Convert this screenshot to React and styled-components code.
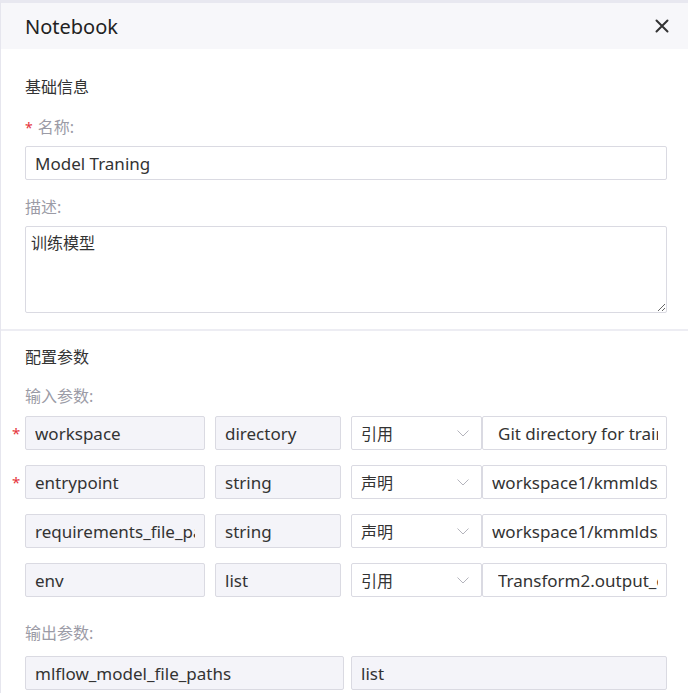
import React from 'react';
import styled, { createGlobalStyle } from 'styled-components';

const GlobalStyle = createGlobalStyle`
  html, body {
    margin: 0;
    padding: 0;
    background: #fff;
    overflow: hidden;
  }
  body {
    font-family: 'Noto Sans', 'Noto Sans CJK SC', sans-serif;
    color: #333;
  }
`;

const inputParams = [
  { name: 'workspace', type: 'directory', mode: '引用', value: 'Git directory for training', required: true, indent: 6 },
  { name: 'entrypoint', type: 'string', mode: '声明', value: 'workspace1/kmmlds/train.py', required: true, indent: 0 },
  { name: 'requirements_file_path', type: 'string', mode: '声明', value: 'workspace1/kmmlds/requirements.txt', required: false, indent: 0 },
  { name: 'env', type: 'list', mode: '引用', value: 'Transform2.output_env', required: false, indent: 6 },
];

export default function App() {
  return (
    <>
      <GlobalStyle />
      <Panel>
        <Header>
          <Title>Notebook</Title>
          <CloseButton aria-label='close'>
            <svg width='14' height='14' viewBox='0 0 14 14'>
              <path d='M1.5 1.5 L12.5 12.5 M12.5 1.5 L1.5 12.5' stroke='#333' strokeWidth='2' strokeLinecap='round' />
            </svg>
          </CloseButton>
        </Header>

        <Section>
          <SectionTitle>基础信息</SectionTitle>
          <Label $gap={7}>
            <Star>*</Star>名称:
          </Label>
          <TextInput readOnly value='Model Traning' />
          <Label $top={16} $gap={8}>描述:</Label>
          <TextArea readOnly defaultValue='训练模型' />
        </Section>

        <Divider />

        <Section $top={15}>
          <SectionTitle>配置参数</SectionTitle>
          <Label $top={17} $gap={9}>输入参数:</Label>
          <ParamList>
            {inputParams.map((p) => (
              <ParamRow key={p.name}>
                <StarCell>{p.required ? '*' : ''}</StarCell>
                <GreyInput readOnly value={p.name} $width={180} />
                <GreyInput readOnly value={p.type} $width={126} />
                <SelectBox>
                  <span>{p.mode}</span>
                  <svg width='12' height='7' viewBox='0 0 12 7'>
                    <path d='M0.5 0.5 L6 6 L11.5 0.5' fill='none' stroke='#b4b4bc' strokeWidth='1' />
                  </svg>
                </SelectBox>
                <ValueInput readOnly value={p.value} $indent={p.indent} />
              </ParamRow>
            ))}
          </ParamList>
          <Label $top={25} $gap={12}>输出参数:</Label>
          <OutputRow>
            <GreyInput readOnly value='mlflow_model_file_paths' />
            <GreyInput readOnly value='list' />
          </OutputRow>
        </Section>
      </Panel>
    </>
  );
}

const Panel = styled.div`
  width: 688px;
  height: 693px;
  box-sizing: border-box;
  border-top: 3px solid #e8e8f0;
  border-left: 1px solid #e6e6ee;
  background: #fff;
`;

const Header = styled.div`
  height: 46px;
  display: flex;
  align-items: center;
  justify-content: space-between;
  padding: 0 19px 0 24px;
  background: #f7f7fa;
`;

const Title = styled.div`
  font-size: 20px;
  color: #222;
`;

const CloseButton = styled.button`
  border: 0;
  background: transparent;
  padding: 0;
  width: 14px;
  height: 14px;
  display: flex;
  cursor: pointer;
`;

const Section = styled.div`
  padding: ${(p) => p.$top ?? 27}px 21px 16px 24px;
  display: flex;
  flex-direction: column;
`;

const SectionTitle = styled.div`
  font-size: 16px;
  line-height: 22px;
  color: #333;
`;

const Label = styled.div`
  font-size: 16px;
  line-height: 22px;
  color: #9b9ba6;
  margin-top: ${(p) => p.$top ?? 18}px;
  margin-bottom: ${(p) => p.$gap ?? 8}px;
`;

const Star = styled.span`
  color: #e5343b;
  margin-right: 5px;
  font-size: 14px;
`;

const fieldBase = `
  box-sizing: border-box;
  height: 34px;
  border: 1px solid #dadae2;
  border-radius: 2px;
  font-family: 'Noto Sans', 'Noto Sans CJK SC', sans-serif;
  font-size: 17px;
  color: #333;
  outline: none;
  padding: 0 9px;
`;

const TextInput = styled.input`
  ${fieldBase}
  width: 642px;
  background: #fff;
`;

const TextArea = styled.textarea`
  ${fieldBase}
  width: 642px;
  height: 87px;
  padding: 4px 5px;
  font-size: 16px;
  line-height: 24px;
  background: #fff;
`;

const Divider = styled.div`
  height: 2px;
  background: #ededf3;
`;

const ParamList = styled.div`
  display: flex;
  flex-direction: column;
  gap: 15px;
`;

const ParamRow = styled.div`
  display: flex;
  align-items: center;
  margin-left: -13px;
  height: 34px;
`;

const StarCell = styled.div`
  width: 13px;
  font-size: 15px;
  color: #e5343b;
  line-height: 34px;
`;

const GreyInput = styled.input`
  ${fieldBase}
  width: ${(p) => (p.$width ? `${p.$width}px` : '100%')};
  margin-right: ${(p) => (p.$width ? 10 : 0)}px;
  background: #f4f4f9;
  min-width: 0;
`;

const SelectBox = styled.div`
  ${fieldBase}
  width: 131px;
  display: flex;
  align-items: center;
  justify-content: space-between;
  padding: 0 12px 0 9px;
  background: #fff;
  font-size: 16px;
`;

const ValueInput = styled.input`
  ${fieldBase}
  width: 185px;
  padding-left: ${(p) => 9 + p.$indent}px;
  padding-right: 8px;
  background: #fff;
`;

const OutputRow = styled.div`
  display: grid;
  grid-template-columns: 319px 316px;
  gap: 7px;
`;
